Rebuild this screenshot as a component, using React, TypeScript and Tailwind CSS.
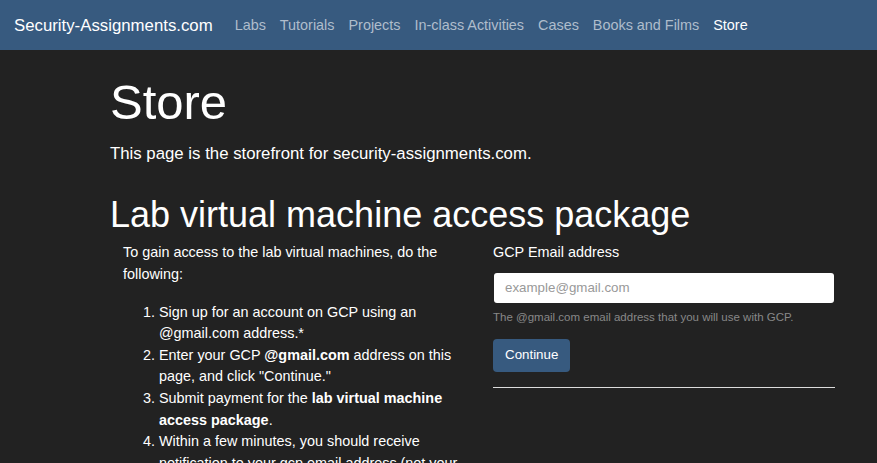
import React from "react";

const navLinks = ["Labs", "Tutorials", "Projects", "In-class Activities", "Cases", "Books and Films"];

function Navbar() {
  return (
    <nav className="flex h-[50px] items-center bg-[#375a7f] px-[14px] pt-[2px]">
      <a className="text-[16.8px] text-white">Security-Assignments.com</a>
      <ul className="ml-[22px] flex items-center gap-[14px] text-[14.4px]">
        {navLinks.map((label) => (
          <li key={label} className="text-[#afbdcc]">
            {label}
          </li>
        ))}
        <li className="text-white">Store</li>
      </ul>
    </nav>
  );
}

function Instructions() {
  return (
    <div className="w-[340px] shrink-0">
      <p className="mb-4">To gain access to the lab virtual machines, do the following:</p>
      <ol className="list-decimal pl-[36px]">
        <li>Sign up for an account on GCP using an @gmail.com address.*</li>
        <li>
          Enter your GCP <strong className="font-bold">@gmail.com</strong> address on this page, and click
          "Continue."
        </li>
        <li>
          Submit payment for the <strong className="font-bold">lab virtual machine access package</strong>.
        </li>
        <li>
          Within a few minutes, you should receive notification to your gcp email address (not your
          security-assignments.com account) that access has been granted.
        </li>
      </ol>
    </div>
  );
}

function EmailForm() {
  return (
    <form className="w-[342px] shrink-0" onSubmit={(e) => e.preventDefault()}>
      <label className="block">GCP Email address</label>
      <input
        type="email"
        placeholder="example@gmail.com"
        className="mt-[8.6px] ml-px block h-[30px] w-[340px] rounded-[3px] bg-white px-[11px] text-[13.33px] text-[#222] placeholder:text-[#999] outline-none"
      />
      <small className="mt-[6px] block text-[11.5px] leading-[17.3px] text-[#888]">
        The @gmail.com email address that you will use with GCP.
      </small>
      <button
        type="submit"
        className="mt-[12.7px] h-[33px] rounded-[4px] bg-[#375a7f] px-[12px] text-[13.33px] text-white"
      >
        Continue
      </button>
      <hr className="mt-[15.5px] border-0 border-t border-[#dcdcdc]" />
    </form>
  );
}

export default function App() {
  return (
    <div className="min-h-screen bg-[#222222] text-[14.4px] leading-[21.6px] text-white [font-family:'Liberation_Sans',Arial,sans-serif]">
      <Navbar />
      <main className="pl-[110px] pt-[22.6px] pb-10">
        <h1 className="text-[49px] leading-[58.8px]">Store</h1>
        <p className="mt-[9.2px] text-[16.8px] leading-[25.2px]">
          This page is the storefront for security-assignments.com.
        </p>
        <h2 className="mt-[26.8px] text-[36px] leading-[43.2px]">Lab virtual machine access package</h2>
        <div className="ml-[13px] mt-[6.7px] flex gap-[30px]">
          <Instructions />
          <EmailForm />
        </div>
      </main>
    </div>
  );
}
